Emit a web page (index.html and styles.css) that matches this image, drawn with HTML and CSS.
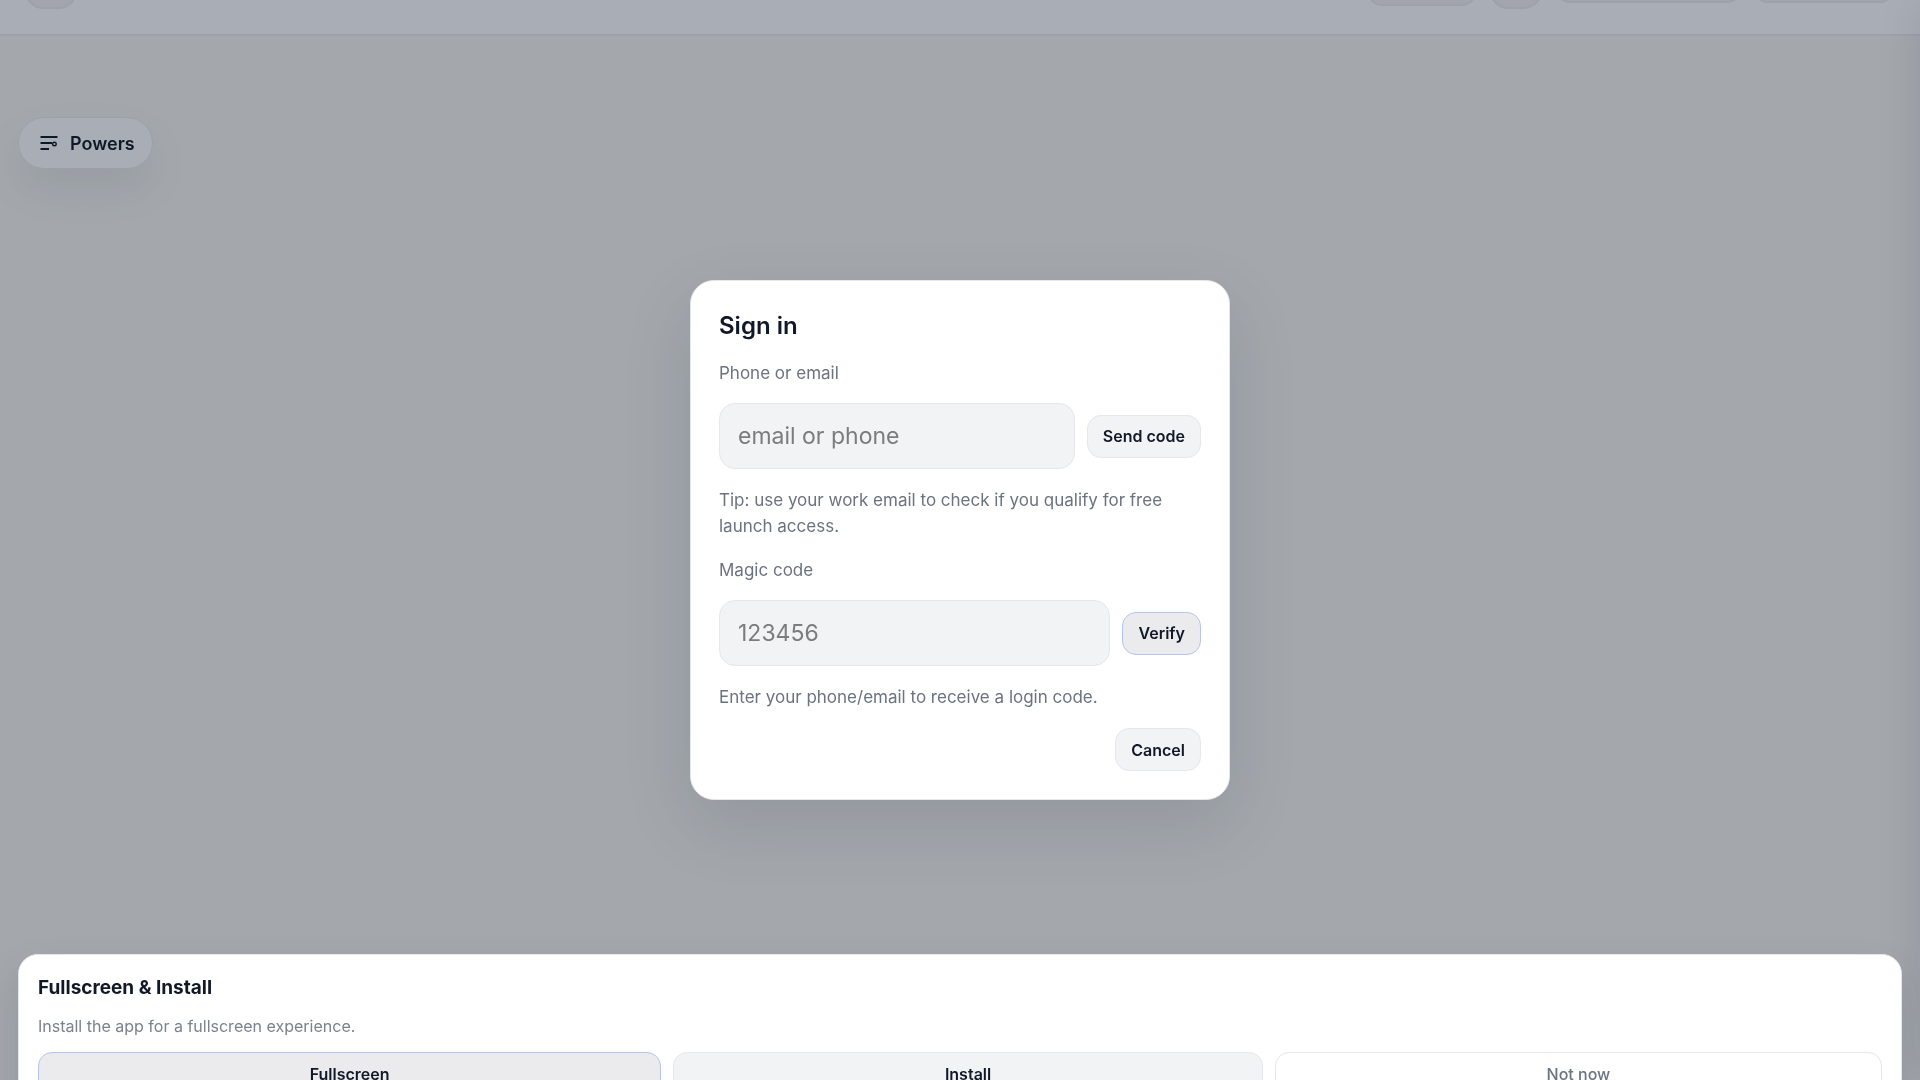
FILE: index.html
```html
<!DOCTYPE html>
<html lang="en">
  <head>
    <meta charset="utf-8">
    <meta name="viewport" content="width=device-width, initial-scale=1">
    <title>Sign in</title>
    <link rel="stylesheet" href="styles.css">
  </head>
  <body>
    <header class="topbar">
      <button class="topbar-btn icon" type="button" aria-label="Menu"></button>
      <div class="topbar-actions">
        <button class="topbar-btn chip" type="button" aria-label="Plan"></button>
        <button class="topbar-btn icon" type="button" aria-label="Theme"></button>
        <button class="topbar-btn wide" type="button" aria-label="Share"></button>
        <button class="topbar-btn login" type="button" aria-label="Account"></button>
      </div>
    </header>

    <button class="powers" type="button">
      <svg class="powers-icon" viewBox="0 0 20 20" fill="none" stroke="currentColor" stroke-width="2.2" aria-hidden="true">
        <path d="M1.5 4h17M1.5 10h11.5M1.5 16h8.5" />
        <circle cx="15.4" cy="11" r="1.8" stroke-width="1.4" />
      </svg>
      Powers
    </button>

    <aside class="drawer"></aside>
    <div class="backdrop"></div>

    <section class="sheet" aria-labelledby="sheet-title">
      <h2 class="sheet-title" id="sheet-title">Fullscreen &amp; Install</h2>
      <p class="sheet-text">Install the app for a fullscreen experience.</p>
      <div class="sheet-actions">
        <button class="btn primary" type="button">Fullscreen</button>
        <button class="btn" type="button">Install</button>
        <button class="btn ghost" type="button">Not now</button>
      </div>
    </section>

    <div class="modal-wrap">
      <form class="modal" role="dialog" aria-labelledby="modal-title">
        <h1 class="modal-title" id="modal-title">Sign in</h1>
        <div class="field">
          <label class="muted" for="contact">Phone or email</label>
          <div class="row">
            <input class="input" id="contact" type="text" placeholder="email or phone">
            <button class="btn" type="button">Send code</button>
          </div>
        </div>
        <p class="muted">Tip: use your work email to check if you qualify for free launch access.</p>
        <div class="field">
          <label class="muted" for="code">Magic code</label>
          <div class="row">
            <input class="input" id="code" type="text" inputmode="numeric" placeholder="123456">
            <button class="btn primary" type="button">Verify</button>
          </div>
        </div>
        <p class="muted">Enter your phone/email to receive a login code.</p>
        <div class="modal-actions">
          <button class="btn" type="button">Cancel</button>
        </div>
      </form>
    </div>
  </body>
</html>
```

FILE: styles.css
```css
* {
  box-sizing: border-box;
}

body {
  margin: 0;
  height: 100vh;
  overflow: hidden;
  background: #f4f6f3;
  color: #111827;
  font-family: Inter, "Liberation Sans", sans-serif;
}

h1,
h2,
p {
  margin: 0;
}

button,
input {
  font-family: inherit;
}

/* top bar, slid partly out of view */
.topbar {
  position: fixed;
  top: -71px;
  left: 0;
  right: 0;
  height: 107px;
  padding: 0 26px 0 24px;
  display: flex;
  align-items: center;
  justify-content: space-between;
  background: #fcfdff;
  border-bottom: 2px solid #e9ebf0;
}

.topbar-actions {
  display: flex;
  align-items: center;
  gap: 13px;
}

.topbar-btn {
  height: 42px;
  border: 2px solid #e9ebef;
  border-radius: 14px;
  background: #f1f2f5;
}

.topbar-btn.icon {
  width: 54px;
  height: 54px;
  border-radius: 20px;
}

.topbar-btn.chip {
  width: 108px;
  height: 48px;
}

.topbar-btn.wide {
  width: 185px;
}

.topbar-btn.login {
  width: 140px;
}

.powers {
  position: fixed;
  top: 117px;
  left: 18px;
  height: 52px;
  padding: 0 17px 0 20px;
  display: flex;
  align-items: center;
  gap: 11px;
  border: 1px solid #e6e8ec;
  border-radius: 26px;
  background: #fcfdff;
  color: #111827;
  font-size: 18px;
  font-weight: 600;
  box-shadow: 0 20px 44px rgba(15, 23, 42, 0.08);
}

.powers-icon {
  width: 20px;
  height: 20px;
}

/* closed drawer, only its shadow reaches the page */
.drawer {
  position: fixed;
  top: 0;
  bottom: 0;
  left: 100%;
  width: 360px;
  background: #fff;
  box-shadow: 0 0 50px rgba(15, 23, 42, 0.12);
}

.backdrop {
  position: fixed;
  inset: 0;
  background: rgba(15, 23, 42, 0.35);
}

.btn {
  height: 43px;
  padding: 0 15px;
  border: 1px solid #e5e7eb;
  border-radius: 14px;
  background: #f2f3f5;
  color: #111827;
  font-size: 16px;
  font-weight: 600;
  white-space: nowrap;
}

.btn.primary {
  border-color: #b7c4ee;
  background: #ebebed;
}

.btn.ghost {
  background: #fff;
  color: #6b7280;
  font-weight: 500;
}

.sheet {
  position: fixed;
  left: 18px;
  right: 18px;
  bottom: -35px;
  padding: 19px;
  border: 1px solid #e5e7eb;
  border-radius: 20px;
  background: #fff;
  box-shadow: 0 18px 40px rgba(15, 23, 42, 0.12);
}

.sheet-title {
  font-size: 19px;
  line-height: 28px;
  font-weight: 700;
}

.sheet-text {
  margin: 12px 0 14px;
  color: #7b818d;
  font-size: 16px;
  line-height: 24px;
}

.sheet-actions {
  display: flex;
  gap: 12px;
}

.sheet-actions .btn {
  flex: 1 1 auto;
}

.modal-wrap {
  position: fixed;
  inset: 0;
  display: flex;
  align-items: center;
  justify-content: center;
}

.modal {
  width: 540px;
  padding: 28px;
  display: flex;
  flex-direction: column;
  gap: 18px;
  border: 1px solid #e5e7eb;
  border-radius: 24px;
  background: #fff;
  box-shadow: 0 24px 70px rgba(15, 23, 42, 0.12);
}

.modal-title {
  font-size: 24px;
  line-height: 33px;
  font-weight: 600;
}

.field {
  display: flex;
  flex-direction: column;
  gap: 17px;
}

.muted {
  color: #6b7280;
  font-size: 17px;
  line-height: 26px;
}

.row {
  display: flex;
  align-items: center;
  gap: 12px;
}

.input {
  flex: 1;
  min-width: 0;
  height: 66px;
  padding: 0 18px;
  border: 1px solid #e5e7eb;
  border-radius: 16px;
  background: #f2f3f5;
  color: #111827;
  font-size: 23px;
}

.input::placeholder {
  color: #7c7c7c;
}

.modal-actions {
  display: flex;
  justify-content: flex-end;
}
```
